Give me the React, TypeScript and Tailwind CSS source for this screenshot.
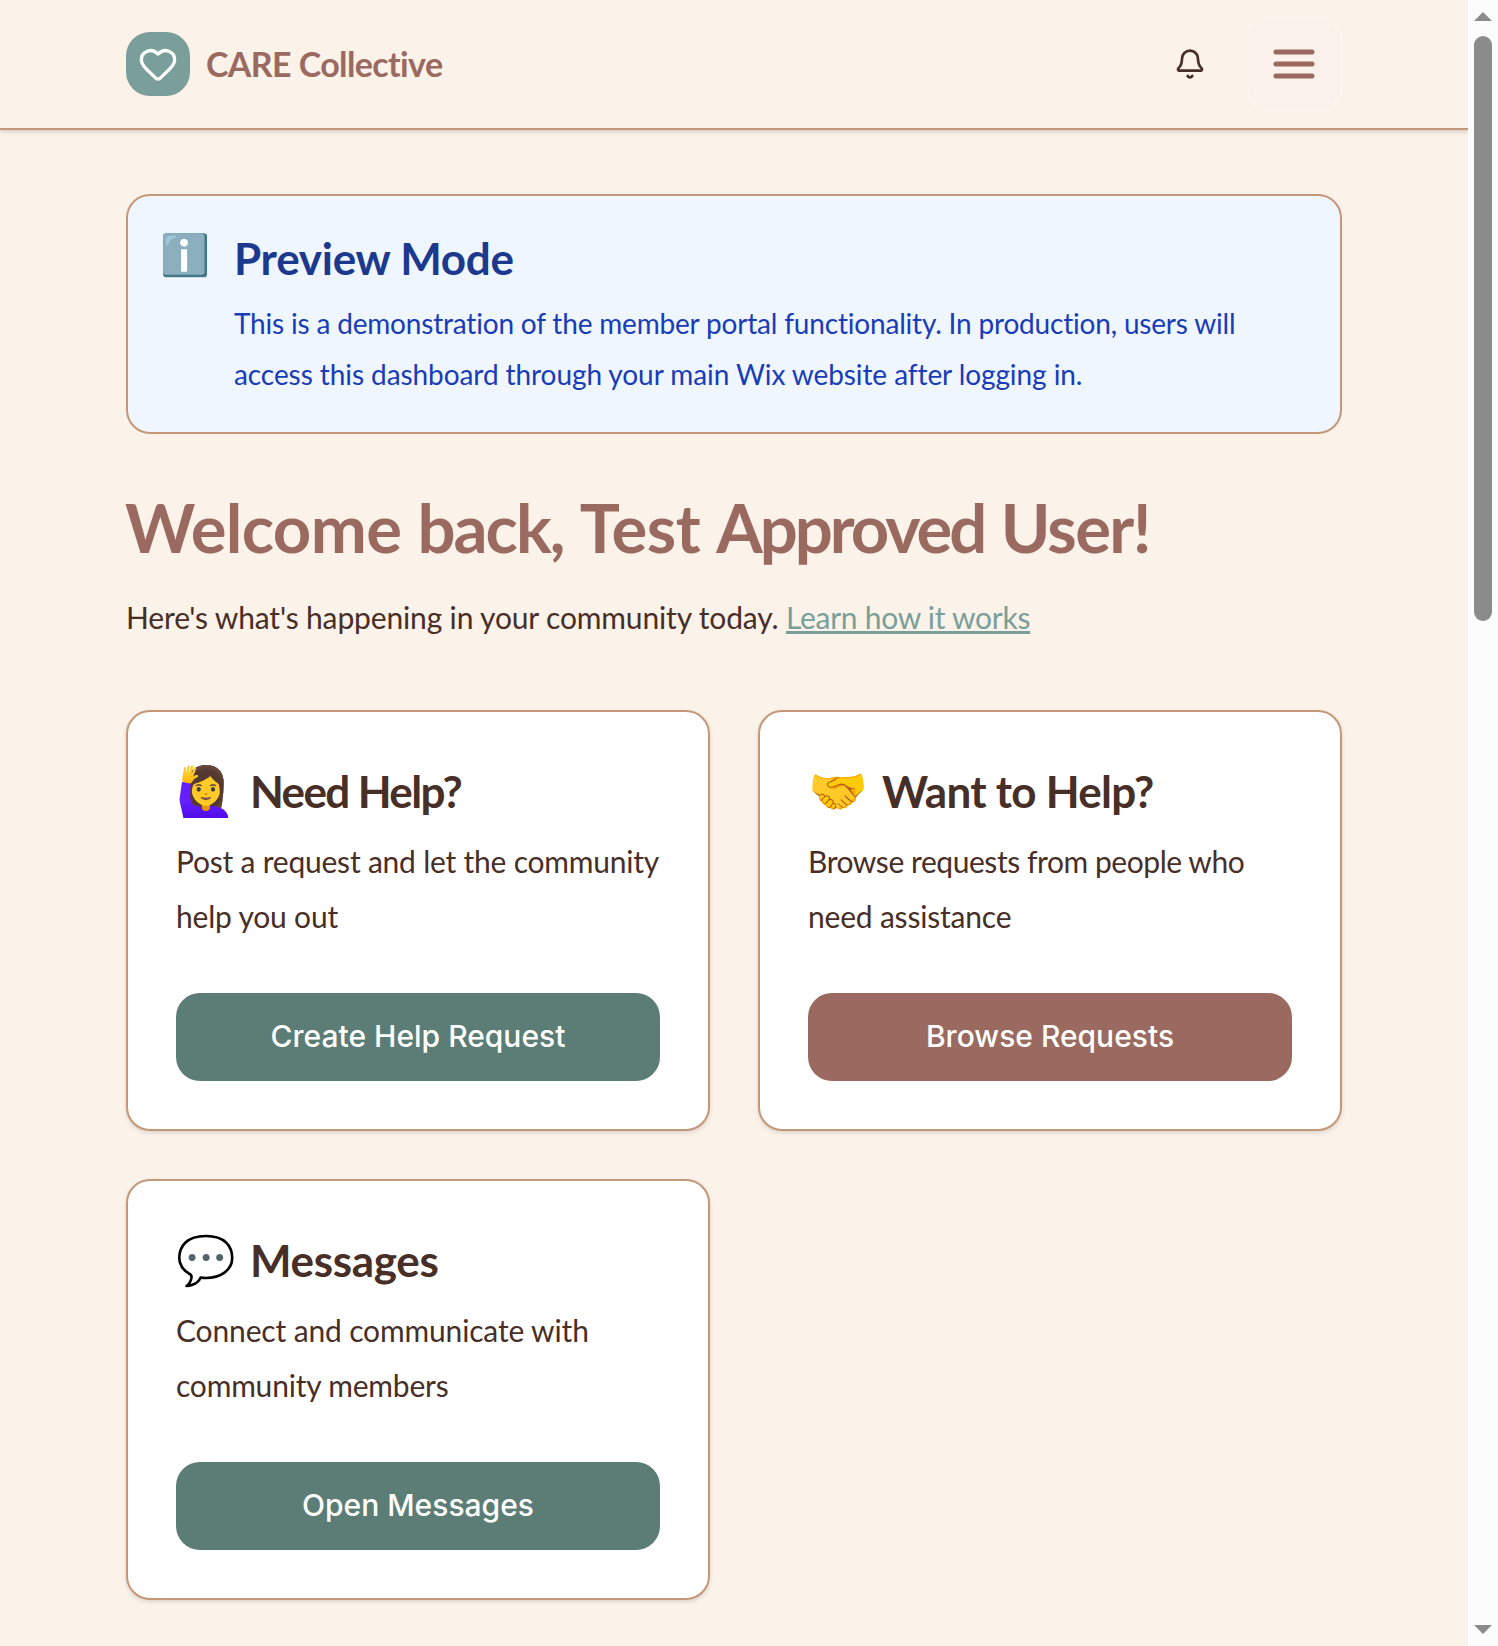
import { Bell, Heart } from "lucide-react";

type Line = { text: string; spacing: string };

type CardProps = {
  emoji: string;
  title: string;
  titleSpacing: string;
  lines: Line[];
  action: string;
  tone: string;
};

function Card({ emoji, title, titleSpacing, lines, action, tone }: CardProps) {
  return (
    <section className="h-[421px] rounded-3xl border-2 border-[#c39778] bg-white p-12 shadow-[0_2px_4px_rgba(0,0,0,0.12)]">
      <h2 className={`flex items-center gap-3.5 text-[44px] leading-[62px] font-bold whitespace-nowrap ${titleSpacing}`}>
        <span className="w-[60px] pb-0.5 text-5xl leading-[58px] font-normal tracking-normal">{emoji}</span>
        {title}
      </h2>
      <p className="mt-3 text-[30px] leading-[55px] whitespace-nowrap">
        {lines.map((line) => (
          <span key={line.text} className={`block ${line.spacing}`}>
            {line.text}
          </span>
        ))}
      </p>
      <button
        className={`mt-[49px] flex h-[88px] w-full items-center justify-center rounded-3xl pb-0.5 font-[Inter,sans-serif] text-[30px] font-medium text-white ${tone}`}
      >
        {action}
      </button>
    </section>
  );
}

function Header() {
  return (
    <header className="flex h-[130px] items-center justify-between border-b-2 border-[#c39778] px-[126px] shadow-[0_2px_4px_rgba(0,0,0,0.15)]">
      <div className="flex items-center gap-4">
        <div className="flex size-16 items-center justify-center rounded-3xl bg-[#7a9e99] text-white">
          <Heart size={40} />
        </div>
        <span className="pb-px text-[34px] font-bold tracking-[-0.62px] text-[#9a6a60]">CARE Collective</span>
      </div>
      <div className="flex items-center gap-10">
        <Bell size={32} />
        <button className="flex size-24 items-center justify-center rounded-3xl border-2 border-[#fdf4ed] bg-[#fbf1eb] text-[#9a6a60]">
          <svg viewBox="0 0 24 24" className="size-12" fill="none" stroke="currentColor" strokeWidth="2.5" strokeLinecap="round">
            <path d="M3 6h18M3 12h18M3 18h18" />
          </svg>
        </button>
      </div>
    </header>
  );
}

function Scrollbar() {
  return (
    <div className="flex w-[30px] flex-col items-center bg-[#fcfcfc] py-3 text-[#8b8b8b]">
      <svg viewBox="0 0 18 9" className="h-[9px] w-[18px]" fill="currentColor">
        <path d="M9 0 18 9H0Z" />
      </svg>
      <div className="mt-[15px] h-[585px] w-[18px] rounded-full bg-[#8b8b8b]" />
      <svg viewBox="0 0 18 9" className="mt-auto h-[9px] w-[18px]" fill="currentColor">
        <path d="M0 0H18L9 9Z" />
      </svg>
    </div>
  );
}

export default function App() {
  return (
    <div className="flex h-[1646px] overflow-hidden bg-[#fbf2e9] font-[Lato,sans-serif] text-[#472f28]">
      <div className="flex w-[1468px] flex-col">
        <Header />
        <main className="px-[126px] pt-16">
          <section className="flex gap-6 rounded-3xl border-2 border-[#c39778] bg-[#eff6ff] p-8">
            <span className="w-[50px] text-[40px] leading-[52px]">ℹ️</span>
            <div>
              <h2 className="text-[44px] leading-[60px] font-bold tracking-[-0.26px] text-[#1c398e]">Preview Mode</h2>
              <p className="mt-2.5 text-[28px] leading-[51px] whitespace-nowrap text-[#193cb8]">
                <span className="block tracking-[-0.185px]">
                  This is a demonstration of the member portal functionality. In production, users will
                </span>
                <span className="block tracking-[-0.08px]">
                  access this dashboard through your main Wix website after logging in.
                </span>
              </p>
            </div>
          </section>
          <h1 className="mt-[53px] -ml-px text-[67px] leading-[80px] font-bold whitespace-nowrap text-[#9a6a60]">
            <span className="tracking-[-0.65px]">Welcome</span> <span className="tracking-[-2px]">back,</span>{" "}
            <span className="tracking-[-0.4px]">Test </span>
            <span className="tracking-[-3px]">Approved</span> <span className="tracking-[-1.6px]">User!</span>
          </h1>
          <p className="mt-[23px] text-[30px] leading-[54px] tracking-[-0.15px] whitespace-nowrap">
            Here's what's happening in your community today.{" "}
            <a className="tracking-[-0.27px] text-[#7a9e99] underline decoration-[3px] underline-offset-[2px] [text-decoration-skip-ink:none]">
              Learn how it works
            </a>
          </p>
          <div className="mt-[66px] grid grid-cols-2 gap-12">
            <Card
              emoji="🙋‍♀️"
              title="Need Help?"
              titleSpacing="tracking-[-1.62px]"
              lines={[
                { text: "Post a request and let the community", spacing: "tracking-[-0.22px]" },
                { text: "help you out", spacing: "tracking-[-0.2px]" },
              ]}
              action="Create Help Request"
              tone="bg-[#5b7d76]"
            />
            <Card
              emoji="🤝"
              title="Want to Help?"
              titleSpacing="tracking-[-0.73px]"
              lines={[
                { text: "Browse requests from people who", spacing: "tracking-[-0.44px]" },
                { text: "need assistance", spacing: "tracking-[-0.2px]" },
              ]}
              action="Browse Requests"
              tone="bg-[#9a6a60]"
            />
            <Card
              emoji="💬"
              title="Messages"
              titleSpacing="tracking-[-0.33px]"
              lines={[
                { text: "Connect and communicate with", spacing: "tracking-[-0.15px]" },
                { text: "community members", spacing: "tracking-[-0.2px]" },
              ]}
              action="Open Messages"
              tone="bg-[#5b7d76]"
            />
          </div>
        </main>
      </div>
      <Scrollbar />
    </div>
  );
}
